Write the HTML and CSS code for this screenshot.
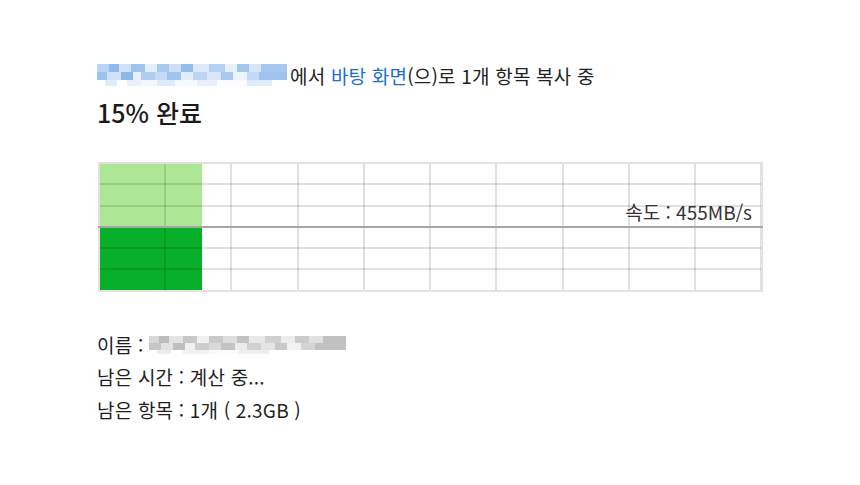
FILE: index.html
```html
<!DOCTYPE html>
<html lang="ko">
<head>
<meta charset="utf-8">
<link rel="stylesheet" href="styles.css">
</head>
<body>
<div class="dialog">
  <div class="title-line">
    <span class="blur blur-blue"></span><span>에서 </span><span class="link">바탕 화면</span><span>(으)로 1개 항목 복사 중</span>
  </div>
  <div class="percent">15% 완료</div>
  <div class="chart">
    <div class="fill">
      <div class="fill-top"></div>
      <div class="fill-bottom"></div>
    </div>
    <div class="grid"></div>
    <div class="midline"></div>
    <div class="speed">속도 : 455MB/s</div>
  </div>
  <div class="details">
    <div class="row">이름 : <span class="blur blur-gray"></span></div>
    <div class="row">남은 시간 : 계산 중...</div>
    <div class="row">남은 항목 : 1개 ( 2.3GB )</div>
  </div>
</div>
</body>
</html>
```
FILE: styles.css
```css
html, body {
  margin: 0;
  padding: 0;
  background: #ffffff;
}
body {
  font-family: "Noto Sans CJK KR", "Noto Sans", sans-serif;
  color: #1e1e1e;
}
.dialog {
  padding: 62px 0 0 97px;
}
.title-line {
  display: flex;
  align-items: center;
  height: 26px;
  font-size: 19px;
  letter-spacing: 0.2px;
  white-space: pre;
  color: #222;
}
.link {
  color: #1c6fcf;
}
.blur {
  display: inline-block;
}
.blur-blue {
  width: 190px;
  height: 22px;
  margin-right: 3px;
  background:
    linear-gradient(90deg, #b9d4f3 0 12px, #8fb9ea 12px 22px, #cfe1f7 22px 34px, #9fc3ee 34px 48px, #e3eefb 48px 60px, #a9caf0 60px 72px, #cfe0f6 72px 84px, #95bdec 84px 96px, #dde9f9 96px 112px, #b4d0f2 112px 128px, #e8f0fc 128px 140px, #a3c6ef 140px 152px, #d6e5f8 152px 164px, #a6c8ef 164px 190px) 0 0 / 190px 8px no-repeat,
    linear-gradient(90deg, #9cc2ee 0 10px, #cde0f7 10px 24px, #8db7ea 24px 36px, #e8f0fc 36px 44px, #b0cdf1 44px 58px, #c5dbf5 58px 70px, #a0c4ee 70px 84px, #e4eefb 84px 96px, #bcd5f3 96px 110px, #d9e7f9 110px 124px, #a8c9ef 124px 136px, #eef4fd 136px 150px, #c3daf5 150px 162px, #9ec3ee 162px 190px) 0 8px / 190px 8px no-repeat,
    linear-gradient(90deg, #ffffff 0 8px, #e2edfb 8px 20px, #ffffff 20px 30px, #e9f1fc 30px 44px, #f4f8fe 44px 60px, #dfebfa 60px 78px, #f6f9fe 78px 100px, #e6effb 100px 120px, #fafcff 120px 150px, #e0ecfa 150px 175px, #ffffff 175px 190px) 0 16px / 190px 6px no-repeat;
}
.percent {
  margin-top: 7px;
  height: 34px;
  line-height: 34px;
  font-size: 25px;
  font-weight: 500;
  color: #1a1a1a;
}
.chart {
  position: relative;
  margin-top: 33px;
  margin-left: 1px;
  width: 661px;
  height: 126px;
  border: 2px solid #e2e2e2;
  box-sizing: content-box;
}
.fill {
  display: flex;
  flex-direction: column;
  width: 102px;
  height: 100%;
}
.fill-top {
  flex: 1;
  background: #ade795;
}
.fill-bottom {
  flex: 1;
  background: #08b02a;
}
.grid {
  position: absolute;
  inset: 0;
  background:
    repeating-linear-gradient(90deg, transparent 0 64.25px, rgba(0, 0, 0, 0.12) 64.25px 66.25px),
    repeating-linear-gradient(180deg, transparent 0 19.3px, rgba(0, 0, 0, 0.12) 19.3px 21.3px);
}
.midline {
  position: absolute;
  left: -2px;
  right: -2px;
  top: 62px;
  height: 2px;
  background: #a5a5a5;
}
.speed {
  position: absolute;
  right: 9px;
  top: 36px;
  font-size: 19px;
  line-height: 24px;
  color: #333;
}
.details {
  margin-top: 36px;
  display: flex;
  flex-direction: column;
  font-size: 19px;
  letter-spacing: 0.2px;
  color: #1e1e1e;
}
.row {
  display: flex;
  align-items: center;
  height: 32.5px;
  white-space: pre;
}
.blur-gray {
  width: 197px;
  height: 20px;
  margin-left: 0;
  background:
    linear-gradient(90deg, #d8d8d8 0 10px, #bdbdbd 10px 20px, #e4e4e4 20px 34px, #c8c8c8 34px 48px, #f0f0f0 48px 60px, #cacaca 60px 74px, #dedede 74px 88px, #c3c3c3 88px 100px, #e8e8e8 100px 116px, #d0d0d0 116px 132px, #ededed 132px 146px, #cbcbcb 146px 160px, #e1e1e1 160px 174px, #c0c0c0 174px 197px) 0 2px / 197px 7px no-repeat,
    linear-gradient(90deg, #c6c6c6 0 12px, #e2e2e2 12px 24px, #bfbfbf 24px 36px, #f0f0f0 36px 46px, #cdcdcd 46px 60px, #dadada 60px 72px, #c4c4c4 72px 86px, #ececec 86px 98px, #d1d1d1 98px 112px, #e4e4e4 112px 126px, #c9c9c9 126px 138px, #f2f2f2 138px 152px, #d5d5d5 152px 166px, #c2c2c2 166px 197px) 0 9px / 197px 7px no-repeat,
    linear-gradient(90deg, #ffffff 0 8px, #ededed 8px 22px, #ffffff 22px 34px, #f1f1f1 34px 60px, #fbfbfb 60px 90px, #efefef 90px 120px, #ffffff 120px 197px) 0 16px / 197px 4px no-repeat;
}
```
